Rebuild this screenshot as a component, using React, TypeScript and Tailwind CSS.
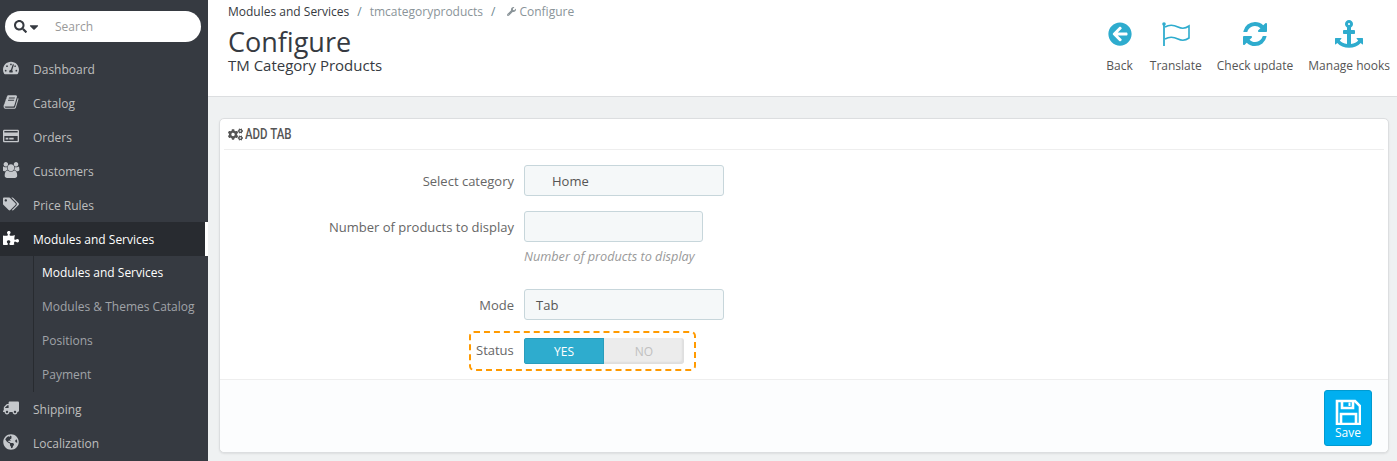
import type { ReactNode } from 'react';
import {
  FaArrowCircleLeft,
  FaCaretDown,
  FaCogs,
  FaGlobeAmericas,
  FaPuzzlePiece,
  FaRegCreditCard,
  FaSearch,
  FaTachometerAlt,
  FaTags,
  FaTruck,
  FaWrench,
} from 'react-icons/fa';

const BookIcon = () => (
  <svg width="16" height="16" viewBox="0 0 1792 1792" fill="currentColor">
    <path d="M1703 478q40 57 18 129l-275 906q-19 64-76.5 107.5t-122.5 43.5h-923q-77 0-148.5-53.5t-99.5-131.5q-24-67-2-127 0-4 3-27t4-37q1-8-3-21.5t-3-19.5q2-11 8-21t16.5-23.5 16.5-23.5q23-38 45-91.5t30-91.5q3-10 .5-30t-.5-28q3-11 17-28t17-23q21-36 42-92t25-90q1-9-2.5-32t.5-28q4-13 22-30.5t22-22.5q19-26 42.5-84.5t27.5-96.5q1-8-3-25.5t-2-26.5q2-8 9-18t18-23 17-21q8-12 16.5-30.5t15-35 16-36 19.5-32 26.5-23.5 36-11.5 47.5 5.5l-1 3q38-9 51-9h761q74 0 114 56t18 130l-274 906q-36 119-71.5 153.5t-128.5 34.5h-869q-27 0-38 15-11 16-1 43 24 70 144 70h923q29 0 56-15.5t35-41.5l300-987q7-22 5-57 38 15 59 43zm-1064 2q-4 13 2 22.5t20 9.5h608q13 0 25.5-9.5t16.5-22.5l21-64q4-13-2-22.5t-20-9.5h-608q-13 0-25.5 9.5t-16.5 22.5zm-83 256q-4 13 2 22.5t20 9.5h608q13 0 25.5-9.5t16.5-22.5l21-64q4-13-2-22.5t-20-9.5h-608q-13 0-25.5 9.5t-16.5 22.5z" />
  </svg>
);

const UsersIcon = () => (
  <svg width="17" height="16" viewBox="0 0 1920 1792" fill="currentColor">
    <path d="M529 896q-162 5-265 128h-134q-82 0-138-40.5t-56-118.5q0-353 124-353 6 0 43.5 21t97.5 42.5 119 21.5q67 0 133-23-5 37-5 66 0 139 81 256zm1071 637q0 120-73 189.5t-194 69.5h-874q-121 0-194-69.5t-73-189.5q0-53 3.5-103.5t14-109 26.5-108.5 43-97.5 62-81 85.5-53.5 111.5-20q10 0 43 21.5t73 48 107 48 135 21.5 135-21.5 107-48 73-48 43-21.5q61 0 111.5 20t85.5 53.5 62 81 43 97.5 26.5 108.5 14 109 3.5 103.5zm-1024-1277q0 106-75 181t-181 75-181-75-75-181 75-181 181-75 181 75 75 181zm704 384q0 159-112.5 271.5t-271.5 112.5-271.5-112.5-112.5-271.5 112.5-271.5 271.5-112.5 271.5 112.5 112.5 271.5zm576 225q0 78-56 118.5t-138 40.5h-134q-103-123-265-128 81-117 81-256 0-29-5-66 66 23 133 23 59 0 119-21.5t97.5-42.5 43.5-21q124 0 124 353zm-128-609q0 106-75 181t-181 75-181-75-75-181 75-181 181-75 181 75 75 181z" />
  </svg>
);

const RefreshIcon = () => (
  <svg width="28" height="28" viewBox="0 0 1792 1792" fill="currentColor">
    <path d="M1639 1056q0 5-1 7-64 268-268 434.5t-478 166.5q-146 0-282.5-55t-243.5-157l-129 129q-19 19-45 19t-45-19-19-45v-448q0-26 19-45t45-19h448q26 0 45 19t19 45-19 45l-137 137q71 66 161 102t187 36q134 0 250-65t186-179q11-17 53-117 8-23 30-23h192q13 0 22.5 9.5t9.5 22.5zm25-800v448q0 26-19 45t-45 19h-448q-26 0-45-19t-19-45 19-45l138-138q-148-137-349-137-134 0-250 65t-186 179q-11 17-53 117-8 23-30 23h-199q-13 0-22.5-9.5t-9.5-22.5v-7q65-268 270-434.5t480-166.5q146 0 284 55.5t245 156.5l130-129q19-19 45-19t45 19 19 45z" />
  </svg>
);

const AnchorIcon = () => (
  <svg width="28" height="28" viewBox="0 0 1792 1792" fill="currentColor">
    <path d="M960 256q0-26-19-45t-45-19-45 19-19 45 19 45 45 19 45-19 19-45zm832 928v352q0 22-20 30-8 2-12 2-12 0-23-9l-93-93q-119 143-318.5 226.5t-429.5 83.5-429.5-83.5-318.5-226.5l-93 93q-9 9-23 9-4 0-12-2-20-8-20-30v-352q0-14 9-23t23-9h352q22 0 30 20 8 19-7 35l-100 100q67 91 189.5 153.5t271.5 82.5v-647h-192q-26 0-45-19t-19-45v-128q0-26 19-45t45-19h192v-163q-58-34-93-92.5t-35-128.5q0-106 75-181t181-75 181 75 75 181q0 70-35 128.5t-93 92.5v163h192q26 0 45 19t19 45v128q0 26-19 45t-45 19h-192v647q149-20 271.5-82.5t189.5-153.5l-100-100q-15-16-7-35 8-20 30-20h352q14 0 23 9t9 23z" />
  </svg>
);

const FlagIcon = () => (
  <svg width="28" height="26" viewBox="0 0 28 26" fill="none" stroke="currentColor">
    <circle cx="2" cy="3" r="1.8" fill="currentColor" stroke="none" />
    <path d="M2 3V25" strokeWidth="1.8" />
    <path d="M3 6C8 3 12 4 16 6S23 8 27 5V17C23 20 20 20 16 18S8 15 3 18" strokeWidth="1.6" />
  </svg>
);

const SaveIcon = () => (
  <svg width="26" height="26" viewBox="0 0 26 26" fill="none" stroke="currentColor" strokeWidth="2.6">
    <path d="M2 2H20L25 7V25H2Z" />
    <path d="M7 2V9H18V2" />
    <path d="M14.5 3.5V7" strokeWidth="2" />
    <path d="M6 25V15H21V25" />
  </svg>
);

const NavItem = ({ icon, label, active }: { icon: ReactNode; label: string; active?: boolean }) => (
  <div
    className={`flex h-[34px] items-center ${
      active ? 'border-r-[3px] border-white bg-[#282b30] text-white' : 'text-[#bebebe]'
    }`}
  >
    <span className={`flex w-[33px] justify-start pb-[2px] pl-[3px] text-[16px] ${active ? 'text-white' : 'text-[#c5c8cc]'}`}>{icon}</span>
    <span className="pt-[1px] text-[12px]">{label}</span>
  </div>
);

const SubItem = ({ label, active }: { label: string; active?: boolean }) => (
  <div className={`flex h-[34px] items-center pl-[42px] text-[12px] ${active ? 'text-white' : 'text-[#a0a3a8]'}`}>{label}</div>
);

const ToolButton = ({ icon, label, className }: { icon: ReactNode; label: string; className?: string }) => (
  <div className={`flex flex-col items-center ${className ?? ''}`}>
    <span className="flex h-[28px] items-center text-[24px] text-[#2eacce]">{icon}</span>
    <span className="mt-[10px] text-[12px] leading-[16px] text-[#555]">{label}</span>
  </div>
);

const Sidebar = () => (
  <aside className="w-[208px] shrink-0 bg-[#363a41]">
    <div className="px-[5px] pb-[10px] pt-[11px]">
      <div className="flex h-[31px] w-[196px] items-center rounded-full bg-white pl-[9px]">
        <FaSearch className="text-[13px] text-[#363a41]" />
        <FaCaretDown className="text-[14px] text-[#363a41]" />
        <span className="ml-[14px] text-[12px] text-[#999]">Search</span>
      </div>
    </div>
    <NavItem icon={<FaTachometerAlt />} label="Dashboard" />
    <NavItem icon={<BookIcon />} label="Catalog" />
    <NavItem icon={<FaRegCreditCard />} label="Orders" />
    <NavItem icon={<UsersIcon />} label="Customers" />
    <NavItem icon={<FaTags />} label="Price Rules" />
    <NavItem icon={<FaPuzzlePiece />} label="Modules and Services" active />
    <div className="relative">
      <div className="absolute bottom-0 left-[33px] top-0 w-px bg-[#282b30]" />
      <SubItem label="Modules and Services" active />
      <SubItem label="Modules & Themes Catalog" />
      <SubItem label="Positions" />
      <SubItem label="Payment" />
    </div>
    <NavItem icon={<FaTruck className="-scale-x-100" />} label="Shipping" />
    <NavItem icon={<FaGlobeAmericas />} label="Localization" />
  </aside>
);

const Field = ({ label, value, width }: { label: string; value?: ReactNode; width: string }) => (
  <div className="flex items-center">
    <div className="w-[304px] pr-[10px] pt-[2px] text-right text-[13px] text-[#666]">{label}</div>
    <div className={`flex h-[31px] items-center rounded-[3px] border border-[#c7d6db] bg-[#f5f8f9] pt-[2px] text-[13px] text-[#555] ${width}`}>
      {value}
    </div>
  </div>
);

export default function App() {
  return (
    <div className="flex h-[461px] w-[1397px] overflow-hidden bg-[#eff1f2] font-['Open_Sans',sans-serif]">
      <Sidebar />
      <main className="min-w-0 flex-1">
        <header className="flex h-[97px] justify-between border-b border-[#dcdee0] bg-white pl-[20px] pr-[7px]">
          <div>
            <div className="flex pt-[3px] text-[12px] leading-[17px]">
              <span className="text-[#363a41]">Modules and Services</span>
              <span className="mx-[8px] text-[#6c868e]">/</span>
              <span className="text-[#8a9499]">tmcategoryproducts</span>
              <span className="mx-[8px] text-[#6c868e]">/</span>
              <span className="flex items-center text-[#8a9499]">
                <FaWrench className="ml-[4px] mr-[3px] text-[9px]" />
                Configure
              </span>
            </div>
            <h1 className="mt-[7px] text-[27px] leading-[30px] text-[#363a41]">Configure</h1>
            <div className="text-[15px] leading-[17px] text-[#363a41]">TM Category Products</div>
          </div>
          <div className="flex gap-[15px] pt-[20px]">
            <ToolButton icon={<FaArrowCircleLeft />} label="Back" className="mr-[2px]" />
            <ToolButton icon={<FlagIcon />} label="Translate" />
            <ToolButton icon={<RefreshIcon />} label="Check update" />
            <ToolButton icon={<AnchorIcon />} label="Manage hooks" />
          </div>
        </header>
        <section className="ml-[11px] mr-[8px] mt-[21px] h-[335px] rounded-[5px] border border-[#dcdee0] bg-white shadow-[0_1px_2px_rgba(0,0,0,0.08)]">
          <div className="mx-[4px] flex h-[31px] items-center gap-[2px] border-b border-[#eeeeee] pl-[4px] text-[#555]">
            <FaCogs className="text-[15px]" />
            <span className="inline-block origin-left scale-x-[0.82] font-['Roboto',sans-serif] text-[14px] font-medium">ADD TAB</span>
          </div>
          <div className="h-[229px] pt-[15px]">
            <Field label="Select category" width="w-[200px]" value={<span className="pl-[27px]">Home</span>} />
            <div className="mt-[15px]">
              <Field label="Number of products to display" width="w-[179px]" />
            </div>
            <div className="ml-[304px] mt-[5px] text-[12.7px] italic text-[#999]">Number of products to display</div>
            <div className="mt-[23px]">
              <Field label="Mode" width="w-[200px]" value={<span className="pl-[11px]">Tab</span>} />
            </div>
            <div className="ml-[249px] mt-[11px] flex h-[40px] w-[227px] items-center rounded-[5px] border-2 border-dashed border-[#ff9a00]">
              <span className="ml-[5px] w-[48px] text-[13px] text-[#666]">Status</span>
              <div className="flex h-[26px] w-[160px] overflow-hidden rounded-[3px] bg-[#ececec] text-[12px] shadow-[inset_-2px_-2px_2px_rgba(0,0,0,0.06)]">
                <span className="flex w-[80px] items-center justify-center border border-[#2a9dbc] bg-[#2eacce] pt-[1px] text-white">YES</span>
                <span className="flex w-[80px] items-center justify-center pt-[1px] text-[#c0c0c0]">NO</span>
              </div>
            </div>
          </div>
          <div className="flex h-[73px] justify-end rounded-b-[5px] border-t border-[#eeeeee] bg-[#fcfdfe] pr-[16px] pt-[10px]">
            <button className="flex h-[56px] w-[48px] flex-col items-center rounded-[3px] border border-[#009ad0] bg-[#00aff0] text-white">
              <span className="mt-[8px] flex"><SaveIcon /></span>
              <span className="text-[12px] leading-[16px]">Save</span>
            </button>
          </div>
        </section>
      </main>
    </div>
  );
}
